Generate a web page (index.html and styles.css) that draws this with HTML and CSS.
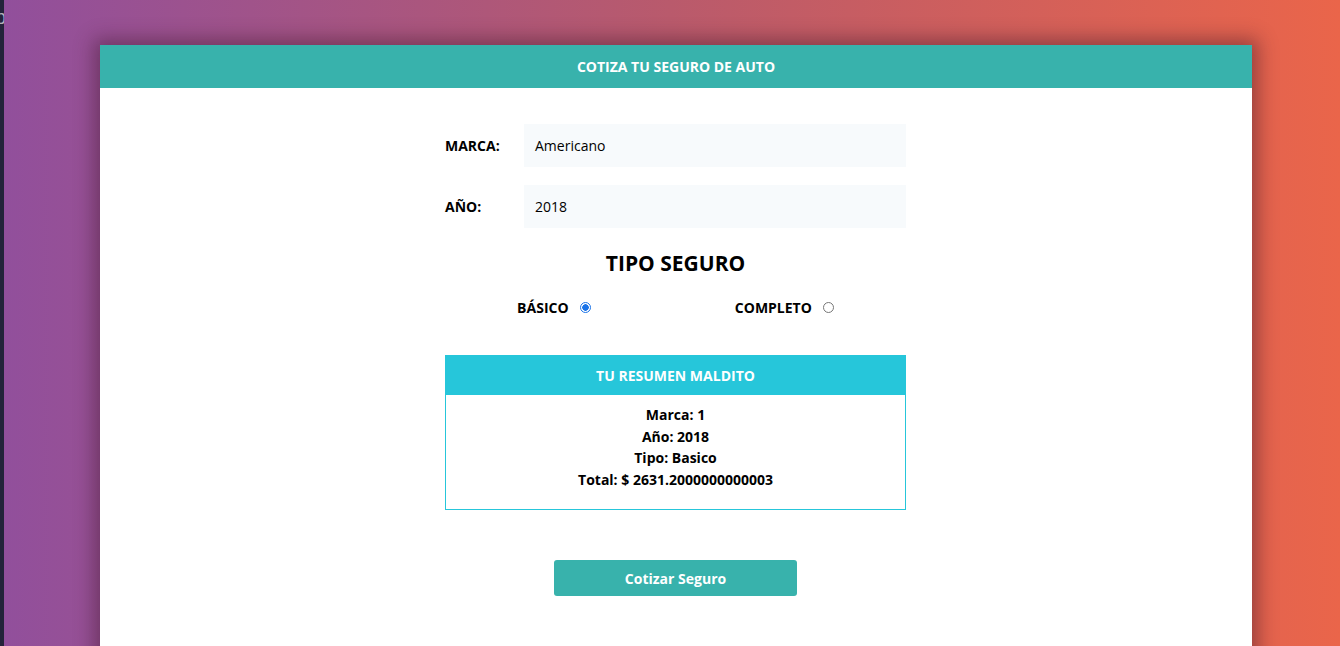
FILE: index.html
```html
<!DOCTYPE html>
<html lang="es">
<head>
<meta charset="utf-8">
<title>Cotizador</title>
<link rel="stylesheet" href="styles.css">
</head>
<body>
<div class="strip"><span class="strip-glyph">p</span></div>
<main class="stage">
  <section class="card">
    <header class="card-header">COTIZA TU SEGURO DE AUTO</header>
    <form class="form">
      <div class="field">
        <label class="field-label">MARCA:</label>
        <div class="field-input">Americano</div>
      </div>
      <div class="field">
        <label class="field-label">AÑO:</label>
        <div class="field-input">2018</div>
      </div>
      <h2 class="section-title">TIPO SEGURO</h2>
      <div class="radios">
        <label class="radio-item">BÁSICO <span class="radio checked"></span></label>
        <label class="radio-item">COMPLETO <span class="radio"></span></label>
      </div>
      <div class="summary">
        <div class="summary-header">TU RESUMEN MALDITO</div>
        <div class="summary-body">
          <p>Marca: 1</p>
          <p>Año: 2018</p>
          <p>Tipo: Basico</p>
          <p>Total: $ 2631.2000000000003</p>
        </div>
      </div>
      <div class="actions">
        <button type="button" class="btn">Cotizar Seguro</button>
      </div>
    </form>
  </section>
</main>
</body>
</html>
```
FILE: styles.css
```css
html, body {
  margin: 0;
  height: 100%;
  overflow: hidden;
}
body {
  display: flex;
  font-family: "Open Sans", "Noto Sans", sans-serif;
  background: linear-gradient(to right, #914f9c 0%, #b95a6c 50%, #ea654a 100%);
  color: #000;
}
.strip {
  width: 4px;
  flex: 0 0 4px;
  background: #23233a;
  overflow: hidden;
  position: relative;
}
.strip-glyph {
  position: absolute;
  left: -5px;
  top: 6px;
  color: #b0b0b8;
  font-size: 20px;
  font-family: "Liberation Sans", sans-serif;
}
.stage {
  flex: 1;
  padding-top: 45px;
  padding-left: 96px;
}
.card {
  width: 1152px;
  height: 620px;
  background: #fff;
  box-shadow: 0 0 18px 6px rgba(60, 20, 40, 0.45);
}
.card-header {
  background: #38b2ac;
  color: #fff;
  height: 43px;
  display: flex;
  align-items: center;
  justify-content: center;
  font-weight: 700;
  font-size: 14px;
}
.form {
  width: 461px;
  margin-left: 345px;
  padding-top: 36px;
}
.field {
  display: flex;
  align-items: center;
  margin-bottom: 18px;
}
.field-label {
  flex: 0 0 79px;
  font-weight: 700;
  font-size: 14px;
}
.field-input {
  flex: 1;
  height: 43px;
  background: #f7fafc;
  display: flex;
  align-items: center;
  padding-left: 11px;
  font-size: 14px;
}
.section-title {
  margin: 0;
  margin-top: 6px;
  text-align: center;
  font-size: 21px;
  font-weight: 700;
  line-height: 34px;
}
.radios {
  display: flex;
  justify-content: space-around;
  margin-top: 13px;
  height: 28px;
  align-items: center;
}
.radio-item {
  display: flex;
  align-items: center;
  font-weight: 700;
  font-size: 14px;
  gap: 11px;
}
.radio {
  width: 11px;
  height: 11px;
  border-radius: 50%;
  border: 1px solid #767676;
  box-sizing: border-box;
  background: #fff;
}
.radio.checked {
  border: 1px solid #1a73e8;
  background: radial-gradient(circle, #1a73e8 0 3px, #fff 3.5px);
}
.summary {
  margin-top: 34px;
}
.summary-header {
  background: #26c6da;
  color: #fff;
  height: 40px;
  display: flex;
  align-items: center;
  justify-content: center;
  font-weight: 700;
  font-size: 14px;
}
.summary-body {
  border: 1px solid #26c6da;
  border-top: none;
  height: 115px;
  box-sizing: border-box;
  padding-top: 9px;
  text-align: center;
  font-weight: 700;
  font-size: 14px;
}
.summary-body p {
  margin: 0;
  line-height: 21.7px;
}
.actions {
  display: flex;
  justify-content: center;
  margin-top: 50px;
}
.btn {
  width: 243px;
  height: 36px;
  background: #38b2ac;
  color: #fff;
  border: none;
  border-radius: 3px;
  font-family: inherit;
  font-weight: 700;
  font-size: 14px;
}
```
